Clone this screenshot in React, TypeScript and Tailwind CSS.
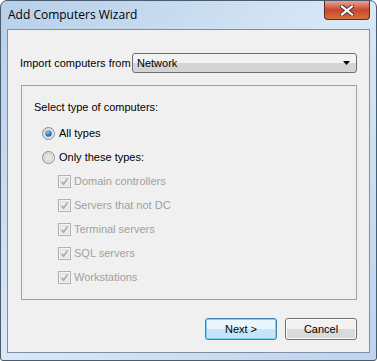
import React from "react";

// Win7-style radio button
function Radio({ checked }: { checked?: boolean }) {
  return (
    <svg width="13" height="13" viewBox="0 0 13 13" className="shrink-0">
      <defs>
        <linearGradient id="rg-ring" x1="0" y1="0" x2="1" y2="1">
          <stop offset="0" stopColor="#d8d8d8" />
          <stop offset="1" stopColor="#f8f8f8" />
        </linearGradient>
        <radialGradient id="rg-dot" cx="0.4" cy="0.35" r="0.7">
          <stop offset="0" stopColor="#8fd3fb" />
          <stop offset="0.5" stopColor="#2a8ad4" />
          <stop offset="1" stopColor="#0f4d8a" />
        </radialGradient>
      </defs>
      <circle cx="6.5" cy="6.5" r="6" fill="url(#rg-ring)" stroke="#8a8a8a" strokeWidth="1" />
      <circle cx="6.5" cy="6.5" r="4" fill="#e4e4e4" stroke="#c8c8c8" strokeWidth="0.8" />
      {checked && <circle cx="6.5" cy="6.5" r="3.1" fill="url(#rg-dot)" />}
    </svg>
  );
}

function DisabledCheck() {
  return (
    <svg width="13" height="13" viewBox="0 0 13 13" className="shrink-0">
      <rect x="0.5" y="0.5" width="12" height="12" fill="#f4f4f4" stroke="#b1b1b1" />
      <rect x="2.5" y="2.5" width="8" height="8" fill="#ededed" stroke="#e0e0e0" />
      <path d="M3.6 6.8 L5.6 9.2 L9.6 3.4" fill="none" stroke="#a9a9a9" strokeWidth="1.6" />
    </svg>
  );
}

const types = [
  "Domain controllers",
  "Servers that not DC",
  "Terminal servers",
  "SQL servers",
  "Workstations",
];

export default function App() {
  return (
    <div className="w-[377px] h-[361px] bg-white">
      <div
        className="w-[377px] h-[361px] flex flex-col rounded-t-[7px] rounded-b-[3px] border border-[#4a5b6e] bg-gradient-to-br from-[#b6cfe9] via-[#d9e8f7] to-[#bcd4ee]"
        style={{ fontFamily: '"Liberation Sans", Arial, sans-serif' }}
      >
        {/* Title bar */}
        <div className="h-[28px] flex items-start pl-[7px] pr-[6px]">
          <span
            className="mt-[5px] text-[12px] text-black"
            style={{ fontFamily: '"Open Sans", "Liberation Sans", sans-serif' }}
          >
            Add Computers Wizard
          </span>
          <div className="flex-1" />
          <div className="w-[46px] h-[19px] rounded-b-[4px] border border-t-0 border-[#5b2a22] bg-gradient-to-b from-[#e8a493] via-[#c9442b] to-[#d5723c] flex items-center justify-center">
            <svg width="14" height="11" viewBox="0 0 14 11">
              <path d="M2 1.5 L12 9.5 M12 1.5 L2 9.5" stroke="#3b3b3b" strokeWidth="4" strokeLinecap="square" />
              <path d="M2 1.5 L12 9.5 M12 1.5 L2 9.5" stroke="#ffffff" strokeWidth="2.2" strokeLinecap="square" />
            </svg>
          </div>
        </div>

        {/* Client area */}
        <div className="mx-[6px] h-[324px] border border-[#7f8ea0] bg-[#f0f0f0] flex flex-col px-[12px] pt-[23px] text-[11px] text-black">
          <div className="flex items-center h-[20px]">
            <span className="w-[112px]">Import computers from</span>
            <div className="flex-1 h-[20px] rounded-[3px] border border-[#707070] bg-gradient-to-b from-[#f2f2f2] from-50% to-[#d4d4d4] to-50% flex items-center pl-[4px] pr-[6px]">
              <span className="flex-1">Network</span>
              <svg width="7" height="4" viewBox="0 0 7 4">
                <path d="M0 0 H7 L3.5 4 Z" fill="#000" />
              </svg>
            </div>
          </div>

          {/* Group box */}
          <div className="mt-[12px] ml-px h-[215px] border border-[#a0a0a0] flex flex-col pl-[12px] pt-[9px]">
            <div className="h-[24px] flex items-center">Select type of computers:</div>
            <div className="mt-[2px] h-[24px] flex items-center gap-[4px] pl-[8px]">
              <Radio checked />
              <span>All types</span>
            </div>
            <div className="h-[24px] flex items-center gap-[4px] pl-[8px]">
              <Radio />
              <span>Only these types:</span>
            </div>
            {types.map((t) => (
              <div key={t} className="h-[24px] flex items-center gap-[3px] pl-[24px] text-[#a0a0a0]">
                <DisabledCheck />
                <span>{t}</span>
              </div>
            ))}
          </div>

          {/* Buttons */}
          <div className="mt-[18px] flex justify-end gap-[8px] pr-[-1px]">
            <button className="w-[72px] h-[22px] rounded-[3px] border border-[#3c7fb1] bg-gradient-to-b from-[#eaf6fd] from-50% to-[#c6e4f7] to-50% shadow-[inset_0_0_0_1px_#7fd1f7] text-[11px]">
              Next &gt;
            </button>
            <button className="w-[72px] h-[22px] rounded-[3px] border border-[#707070] bg-gradient-to-b from-[#f2f2f2] from-50% to-[#dadada] to-50% shadow-[inset_0_0_0_1px_#fcfcfc] text-[11px]">
              Cancel
            </button>
          </div>
        </div>
      </div>
    </div>
  );
}
